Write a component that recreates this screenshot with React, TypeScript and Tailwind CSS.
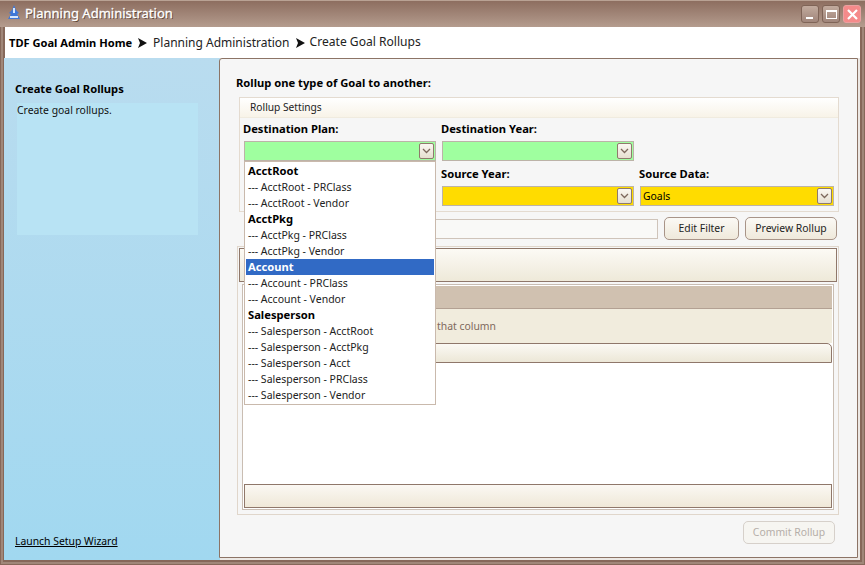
const F = "font-['DejaVu_Sans',sans-serif]";

function Arrow({ r }: { r: number }) {
  return (
    <svg width="9" height="10" viewBox="0 0 9 10" className="ml-[6px]" style={{ marginRight: r }}><path d="M0 0 L9 5 L0 10 L2 5 Z" fill="#111" /></svg>
  );
}

function Combo({ x, y, w, bg, text }: { x: number; y: number; w: number; bg: string; text?: string }) {
  return (
    <div
      className="absolute h-[20px] border border-[#bcb3a8] flex items-center pl-[2px] text-[10.4px] text-black"
      style={{ left: x, top: y, width: w, background: bg }}
    >
      {text}
      <div className="absolute right-[1px] top-[1px] w-[15px] h-[16px] rounded-[2px] border border-[#8f7a6c] bg-gradient-to-b from-[#fbf8f2] to-[#e6dfd0] flex items-center justify-center">
        <svg width="9" height="6" viewBox="0 0 9 6"><path d="M1 1 L4.5 4.5 L8 1" fill="none" stroke="#7d685c" strokeWidth="1.3" /></svg>
      </div>
    </div>
  );
}

function Btn({ x, w, y, label, off }: { x: number; w: number; y: number; label: string; off?: boolean }) {
  return (
    <div
      className={`absolute h-[23px] rounded-[5px] border flex items-center justify-center text-[10.4px] ${off ? "border-[#d6d0ca] text-[#b5aea8] bg-[#f6f5f1]" : "border-[#a89488] text-[#222] bg-gradient-to-b from-[#fbf9f5] to-[#efe9db]"}`}
      style={{ left: x, top: y, width: w }}
    >
      {label}
    </div>
  );
}

const items: [string, boolean][] = [
  ["AcctRoot", true],
  ["--- AcctRoot - PRClass", false],
  ["--- AcctRoot - Vendor", false],
  ["AcctPkg", true],
  ["--- AcctPkg - PRClass", false],
  ["--- AcctPkg - Vendor", false],
  ["Account", true],
  ["--- Account - PRClass", false],
  ["--- Account - Vendor", false],
  ["Salesperson", true],
  ["--- Salesperson - AcctRoot", false],
  ["--- Salesperson - AcctPkg", false],
  ["--- Salesperson - Acct", false],
  ["--- Salesperson - PRClass", false],
  ["--- Salesperson - Vendor", false],
];

function WinBtn({ x, children, red }: { x: number; children: React.ReactNode; red?: boolean }) {
  return (
    <div
      className={`absolute top-[5px] w-[18px] h-[18px] rounded-[3px] border flex items-center justify-center ${red ? "border-[#e9a0a0] bg-[#f58a8a]" : "border-[#7f6457] bg-gradient-to-b from-[#c2ab9e] to-[#a0857a]"}`}
      style={{ left: x }}
    >
      {children}
    </div>
  );
}

export default function App() {
  return (
    <div className={`relative w-[865px] h-[565px] overflow-hidden bg-[#86685a] ${F} text-[10.4px] leading-none text-black`}>
      {/* Window frame */}
      <div className="absolute left-[1px] top-[1px] w-[863px] h-[563px] border-[2px] border-[#a08779]" />
      {/* Title bar */}
      <div className="absolute left-0 top-0 w-[865px] h-[27px] bg-gradient-to-b from-[#8d6e60] to-[#b49c8e] border-t border-[#b9a294]" />
      <svg className="absolute left-[7px] top-[5px]" width="14" height="16" viewBox="0 0 14 16">
        <path d="M7 0 L9 5 L12 8 L10 9 L13 14 L1 14 L4 9 L2 8 L5 5 Z" fill="#3f78d8" />
        <path d="M6 3 L8 3 L8 8 L6 8 Z M3 11 L11 11 L11 13 L3 13 Z" fill="#d8e8fc" />
      </svg>
      <div className="absolute left-[25px] top-[6px] text-[13px] leading-[15px] text-white [-webkit-text-stroke:0.3px_white] [text-shadow:1px_1px_0_#5d4438]">Planning Administration</div>
      <WinBtn x={801}><div className="w-[7px] h-[2px] bg-white mt-[8px] -ml-[1px]" /></WinBtn>
      <WinBtn x={822}><div className="w-[11px] h-[9px] border border-white border-t-[2px]" /></WinBtn>
      <WinBtn x={843} red>
        <svg width="11" height="11" viewBox="0 0 11 11"><path d="M1 1 L10 10 M10 1 L1 10" stroke="#fff" strokeWidth="2.2" /></svg>
      </WinBtn>

      {/* Breadcrumb */}
      <div className="absolute left-[5px] top-[27px] w-[855px] h-[31px] bg-white flex items-center pl-[4px]">
        <span className="font-bold text-[11.1px]">TDF Goal Admin Home</span>
        <Arrow r={6} />
        <span className="text-[12px] text-[#222]">Planning Administration</span>
        <Arrow r={5} />
        <span className="text-[12.1px] text-[#222]">Create Goal Rollups</span>
      </div>

      {/* Sidebar */}
      <div className="absolute left-[4px] top-[58px] w-[216px] h-[502px] bg-gradient-to-b from-[#b9dcef] to-[#a1d8f0]">
        <div className="absolute left-[11px] top-[25px] font-bold text-[11.2px] leading-[12px]">Create Goal Rollups</div>
        <div className="absolute left-[13px] top-[45px] w-[181px] h-[132px] bg-[#b8e3f4] pt-[1px] leading-[12px] text-[10.4px] text-[#111]">Create goal rollups.</div>
        <div className="absolute left-[11px] top-[477px] underline leading-[12px] text-[10.4px]">Launch Setup Wizard</div>
      </div>

      {/* Main panel */}
      <div className="absolute left-[220px] top-[58px] w-[640px] h-[502px] bg-[#ece8e4]" />
      <div className="absolute left-[219px] top-[58px] w-[639px] h-[500px] bg-[#f6f6f6] rounded-tl-[3px] border border-[#8c7466]" />
      <div className="absolute left-[236px] top-[77px] font-bold text-[11.2px] leading-[12px]">Rollup one type of Goal to another:</div>

      {/* Rollup Settings */}
      <div className="absolute left-[239px] top-[97px] w-[600px] h-[115px] border border-[#e4dbd0] bg-[#f6f6f6]">
        <div className="h-[20px] bg-gradient-to-b from-[#ffffff] to-[#f8f3e8] border-b border-[#f0ebdf] pl-[10px] flex items-center text-[10.2px] text-[#222]">Rollup Settings</div>
      </div>
      <div className="absolute left-[243px] top-[123px] font-bold text-[11.2px] leading-[12px]">Destination Plan:</div>
      <div className="absolute left-[441px] top-[123px] font-bold text-[11.2px] leading-[12px]">Destination Year:</div>
      <div className="absolute left-[441px] top-[168px] font-bold text-[11.2px] leading-[12px]">Source Year:</div>
      <div className="absolute left-[639px] top-[168px] font-bold text-[11.2px] leading-[12px]">Source Data:</div>
      <Combo x={244} y={141} w={192} bg="#9fff9f" />
      <Combo x={442} y={141} w={192} bg="#9fff9f" />
      <Combo x={442} y={186} w={192} bg="#ffdc00" />
      <Combo x={640} y={186} w={194} bg="#ffdc00" text="Goals" />

      {/* Filter */}
      <div className="absolute left-[430px] top-[219px] w-[228px] h-[20px] bg-[#f9f9f7] border border-[#cfc4ba]" />
      <Btn x={664} y={217} w={75} label="Edit Filter" />
      <Btn x={745} y={217} w={92} label="Preview Rollup" />

      {/* Results */}
      <div className="absolute left-[237px] top-[246px] w-[602px] h-[269px] border border-[#e0d6cb] bg-[#f6f6f6]" />
      <div className="absolute left-[239px] top-[248px] w-[598px] h-[34px] border border-[#8f776a] bg-gradient-to-b from-[#fcfaf5] to-[#eee9d9]" />
      <div className="absolute left-[242px] top-[284px] w-[592px] h-[226px] border border-[#c9bdb2] bg-white">
        <div className="absolute left-[1px] top-[1px] w-[588px] h-[23px] bg-[#d0c1b0] border-b border-[#b3a193]" />
        <div className="absolute left-[1px] top-[24px] w-[588px] h-[34px] bg-[#f1ecdd] flex items-center justify-end pr-[336px] text-[10.4px] text-[#7f695c]">r that column</div>
        <div className="absolute left-[1px] top-[58px] w-[588px] h-[20px] border border-[#8f776a] rounded-tr-[5px] bg-gradient-to-b from-[#fbf9f4] to-[#ece7d7]" />
        <div className="absolute left-[1px] top-[199px] w-[588px] h-[24px] border border-[#8f776a] bg-gradient-to-b from-[#fbf8f3] to-[#efe8d8]" />
      </div>
      <Btn x={743} y={521} w={92} label="Commit Rollup" off />

      {/* Dropdown */}
      <div className="absolute left-[244px] top-[161px] w-[192px] h-[244px] bg-white border border-[#c9b9ac] px-[1px] pt-[1px]">
        {items.map(([t, b]) => (
          <div
            key={t}
            className={`h-[16px] flex items-center pl-[2px] whitespace-nowrap ${b ? "font-bold text-[11.2px]" : "text-[10.5px] text-[#222]"} ${t === "Account" ? "bg-[#316ac5] text-white" : ""}`}
          >
            {t}
          </div>
        ))}
      </div>
    </div>
  );
}
